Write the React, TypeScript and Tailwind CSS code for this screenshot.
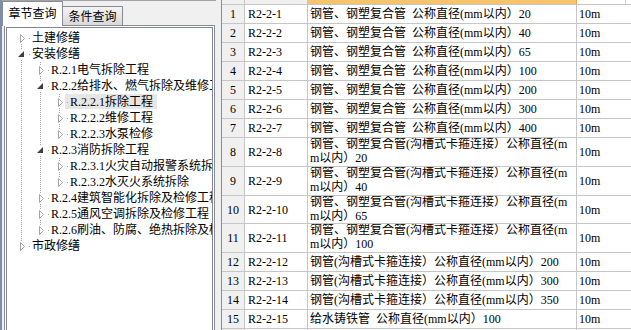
import React from "react";

type TreeNode = {
  label: string;
  level: number;
  expanded?: boolean;
  first?: boolean;
  last?: boolean;
  guides: boolean[];
  selected?: boolean;
};

const tree: TreeNode[] = [
  { label: "土建修缮", level: 0, first: true, guides: [] },
  { label: "安装修缮", level: 0, expanded: true, guides: [] },
  { label: "R.2.1电气拆除工程", level: 1, guides: [true] },
  { label: "R.2.2给排水、燃气拆除及维修工程", level: 1, expanded: true, guides: [true] },
  { label: "R.2.2.1拆除工程", level: 2, guides: [true, true], selected: true },
  { label: "R.2.2.2维修工程", level: 2, guides: [true, true] },
  { label: "R.2.2.3水泵检修", level: 2, last: true, guides: [true, true] },
  { label: "R.2.3消防拆除工程", level: 1, expanded: true, guides: [true] },
  { label: "R.2.3.1火灾自动报警系统拆除", level: 2, guides: [true, true] },
  { label: "R.2.3.2水灭火系统拆除", level: 2, last: true, guides: [true, true] },
  { label: "R.2.4建筑智能化拆除及检修工程", level: 1, guides: [true] },
  { label: "R.2.5通风空调拆除及检修工程", level: 1, guides: [true] },
  { label: "R.2.6刷油、防腐、绝热拆除及检修工程", level: 1, last: true, guides: [true] },
  { label: "市政修缮", level: 0, last: true, guides: [] },
];

const DOT = "#a3a3a3";

function GuideCell({ on }: { on: boolean }) {
  return (
    <svg width="19" height="16" className="shrink-0" shapeRendering="crispEdges">
      {on &&
        [0, 2, 4, 6, 8, 10, 12, 14].map((y) => (
          <rect key={y} x={9} y={y} width={1} height={1} fill={DOT} />
        ))}
    </svg>
  );
}

function OwnCell({ node }: { node: TreeNode }) {
  const top = node.first ? [] : [0, 2];
  const bottom = node.last ? [] : [14];
  return (
    <svg width="19" height="16" className="shrink-0" shapeRendering="crispEdges">
      {node.selected && <rect x={15} y={0} width={4} height={15} fill="#e6e6e6" />}
      {[...top, ...bottom].map((y) => (
        <rect key={y} x={9} y={y} width={1} height={1} fill={DOT} />
      ))}
      <rect x={17} y={8} width={1} height={1} fill={DOT} />
      {node.expanded ? (
        <polygon points="12,5 12,11 6,11" fill="#3f3f3f" shapeRendering="auto" />
      ) : (
        <polygon
          points="8.5,4.5 12.5,8.5 8.5,12.5"
          fill="#ffffff"
          stroke="#a6a6a6"
          strokeWidth="1"
          shapeRendering="auto"
        />
      )}
    </svg>
  );
}

function TreeRow({ node }: { node: TreeNode }) {
  return (
    <div className="flex h-[16px] w-full items-center overflow-hidden whitespace-nowrap">
      {node.guides.map((g, i) => (
        <GuideCell key={i} on={g} />
      ))}
      <OwnCell node={node} />
      <span
        className={
          node.selected
            ? "h-[15px] min-w-0 self-start overflow-hidden bg-[#e6e6e6] pl-px pr-[4px] leading-[16px]"
            : "h-[16px] min-w-0 overflow-hidden pl-px leading-[16px]"
        }
      >
        {node.label}
      </span>
    </div>
  );
}

type Row = { n: number; code: string; lines: string[]; h: string };

const A = "钢管、钢塑复合管\u2002公称直径(mm以内）";
const B1 = "钢管、钢塑复合管(沟槽式卡箍连接）公称直径(m";
const C = "钢管(沟槽式卡箍连接）公称直径(mm以内）";
const D = "给水铸铁管\u2002公称直径(mm以内）";

const rows: Row[] = [
  { n: 1, code: "R2-2-1", lines: [A + "20"], h: "h-[19px]" },
  { n: 2, code: "R2-2-2", lines: [A + "40"], h: "h-[19px]" },
  { n: 3, code: "R2-2-3", lines: [A + "65"], h: "h-[19px]" },
  { n: 4, code: "R2-2-4", lines: [A + "100"], h: "h-[19px]" },
  { n: 5, code: "R2-2-5", lines: [A + "200"], h: "h-[19px]" },
  { n: 6, code: "R2-2-6", lines: [A + "300"], h: "h-[19px]" },
  { n: 7, code: "R2-2-7", lines: [A + "400"], h: "h-[19px]" },
  { n: 8, code: "R2-2-8", lines: [B1, "m以内）20"], h: "h-[29px]" },
  { n: 9, code: "R2-2-9", lines: [B1, "m以内）40"], h: "h-[29px]" },
  { n: 10, code: "R2-2-10", lines: [B1, "m以内）65"], h: "h-[28px]" },
  { n: 11, code: "R2-2-11", lines: [B1, "m以内）100"], h: "h-[29px]" },
  { n: 12, code: "R2-2-12", lines: [C + "200"], h: "h-[19px]" },
  { n: 13, code: "R2-2-13", lines: [C + "300"], h: "h-[19px]" },
  { n: 14, code: "R2-2-14", lines: [C + "350"], h: "h-[19px]" },
  { n: 15, code: "R2-2-15", lines: [D + "100"], h: "h-[19px]" },
  { n: 16, code: "R2-2-16", lines: [D + "150"], h: "h-[19px]" },
];

function TableRow({ r }: { r: Row }) {
  const multi = r.lines.length > 1;
  return (
    <div className={`flex shrink-0 overflow-hidden border-b border-[#c6c6c6] ${r.h}`}>
      <div className="flex w-[23px] shrink-0 items-center justify-center border-r border-[#c6c6c6] bg-[#f0f0f0] leading-[16px]">
        {r.n}
      </div>
      <div className="flex w-[63px] shrink-0 items-center border-r border-[#c6c6c6] pl-[3px] leading-[16px]">
        {r.code}
      </div>
      <div
        className={
          multi
            ? "flex w-[269px] shrink-0 flex-col overflow-hidden whitespace-nowrap border-r border-[#c6c6c6] pl-[2px] leading-[13.5px]"
            : "flex w-[269px] shrink-0 items-center overflow-hidden whitespace-nowrap border-r border-[#c6c6c6] pl-[2px] leading-[16px]"
        }
      >
        {multi ? r.lines.map((l, i) => <div key={i}>{l}</div>) : r.lines[0]}
      </div>
      <div className="flex w-[54px] shrink-0 items-center pl-[2px] leading-[16px]">10m</div>
    </div>
  );
}

export default function App() {
  return (
    <div className="flex h-[330px] w-[631px] overflow-hidden bg-[#f0f0f0] font-['Liberation_Serif','Noto_Sans_CJK_SC',serif] text-[12px] text-black">
      {/* Left panel */}
      <div className="flex h-full w-[221px] shrink-0 flex-col border-l-2 border-[#7f8ea6]">
        <div className="mr-[5px] flex flex-1 flex-col border-t border-[#a3a3a3]">
          <div className="flex h-[24px] shrink-0 items-end">
            <div className="relative z-10 -mb-px flex h-[25px] w-[61px] justify-center border border-b-0 border-[#898c95] bg-white pt-[4px] leading-[16px]">
              章节查询
            </div>
            <div className="flex h-[19px] w-[60px] items-center justify-center border border-b-0 border-l-0 border-[#898c95] bg-gradient-to-b from-[#f4f4f4] to-[#d9d9d9] pt-px leading-[16px]">
              条件查询
            </div>
          </div>
          <div className="ml-[2px] mr-px flex min-w-0 flex-1 flex-col border border-b-0 border-[#898c95] bg-white px-px pt-px">
            <div className="flex min-w-0 flex-1 flex-col overflow-hidden border border-b-0 border-[#828790] bg-white pl-[5px] pt-[2px]">
              {tree.map((n, i) => (
                <TreeRow key={i} node={n} />
              ))}
            </div>
          </div>
        </div>
      </div>

      {/* Table */}
      <div className="flex h-full w-[410px] shrink-0 flex-col border-l border-[#8c8c8c] bg-white">
        <div className="flex h-[5px] shrink-0 border-b border-[#c6c6c6]">
          <div className="w-[23px] shrink-0 border-r border-[#c6c6c6] bg-[#f0f0f0]" />
          <div className="w-[63px] shrink-0 border-r border-[#c6c6c6] bg-[#f0f0f0]" />
          <div className="w-[269px] shrink-0 border-r border-[#d9a650] bg-[#f7c46e]" />
          <div className="w-[49px] shrink-0 border-r border-[#d0d0d0] bg-white" />
          <div className="flex-1 bg-white" />
        </div>
        {rows.map((r) => (
          <TableRow key={r.n} r={r} />
        ))}
      </div>
    </div>
  );
}
